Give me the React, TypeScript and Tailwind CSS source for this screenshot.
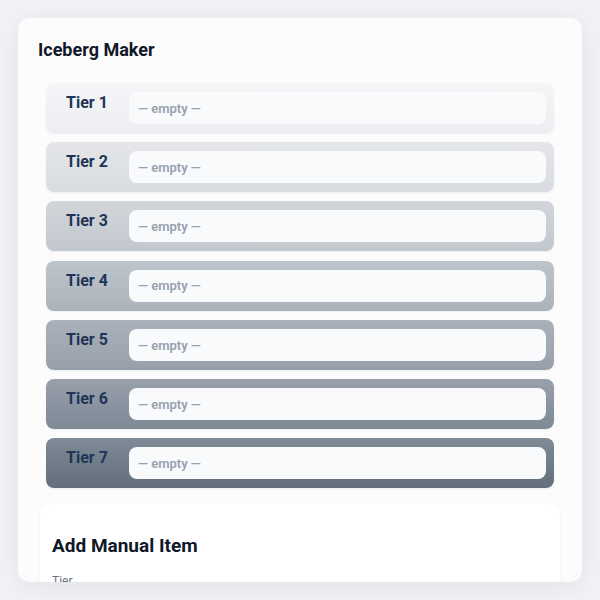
const tiers = [
  { name: "Tier 1", bg: "bg-gradient-to-b from-[#f4f5f7] to-[#eceef1]" },
  { name: "Tier 2", bg: "bg-gradient-to-b from-[#e4e6e9] to-[#d9dce0]" },
  { name: "Tier 3", bg: "bg-gradient-to-b from-[#d2d6db] to-[#c3c8ce]" },
  { name: "Tier 4", bg: "bg-gradient-to-b from-[#bec4cb] to-[#acb3bb]" },
  { name: "Tier 5", bg: "bg-gradient-to-b from-[#aab1ba] to-[#97a0aa]" },
  { name: "Tier 6", bg: "bg-gradient-to-b from-[#97a0ab] to-[#7f8996]" },
  { name: "Tier 7", bg: "bg-gradient-to-b from-[#808b98] to-[#636e7b]" },
];

export default function App() {
  return (
    <div className="min-h-screen bg-[#f1f2f5] p-[18px] font-['Roboto','Liberation_Sans',sans-serif]">
      <div className="h-[564px] overflow-hidden rounded-xl bg-[#fcfcfd] px-5 pt-5 shadow-[0_4px_24px_rgba(15,23,42,0.07)]">
        <h1 className="mb-[21px] text-[18px] font-bold leading-6 text-[#111827]">Iceberg Maker</h1>

        <div className="mx-2 flex flex-col gap-[9.2px]">
          {tiers.map((t) => (
            <div key={t.name} className={`flex h-[50px] rounded-lg pl-5 pr-2 py-[9px] shadow-[0_1px_2px_rgba(15,23,42,0.06)] ${t.bg}`}>
              <div className="w-[63px] pt-[1px] text-[16px] font-bold leading-5 text-[#1e3557]">{t.name}</div>
              <div className="flex flex-1 items-center rounded-lg bg-[#f8fafc] pl-[9px] pt-[1px]">
                <span className="text-[13px] font-semibold text-[#97a1b0]">— empty —</span>
              </div>
            </div>
          ))}
        </div>

        <div className="mx-[2px] mt-4 rounded-[10px] bg-white px-3 pt-[28px] shadow-[0_1px_3px_rgba(15,23,42,0.05)]">
          <h2 className="text-[19px] font-bold leading-7 text-[#111827]">Add Manual Item</h2>
          <label className="mt-[13px] block text-[12px] leading-4 text-[#6b7280]">Tier</label>
          <div className="mt-2 h-9 rounded-md border border-[#e5e7eb]" />
        </div>
      </div>
    </div>
  );
}
